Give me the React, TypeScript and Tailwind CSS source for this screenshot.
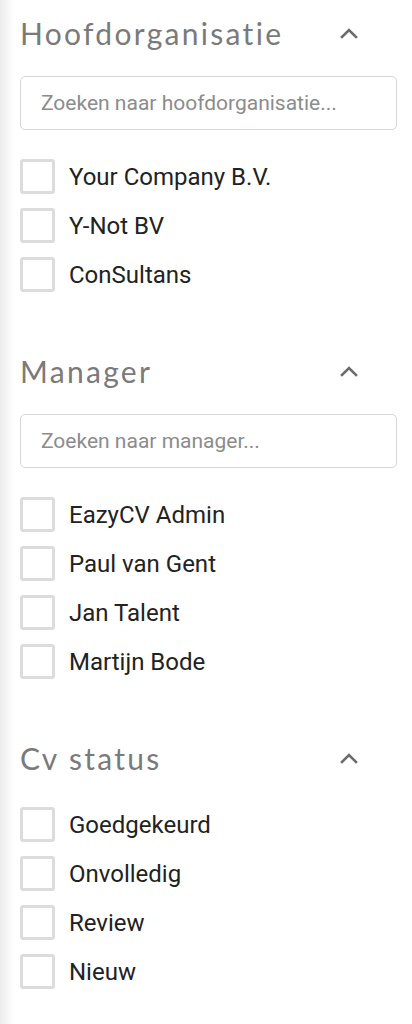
import React, { useState } from 'react';

interface FilterSectionProps {
  title: string;
  placeholder?: string;
  options: string[];
  className?: string;
}

function Chevron() {
  return (
    <svg width="20" height="12" viewBox="0 0 20 12" fill="none" className="text-[#6b6b6b]">
      <path d="M3 10 L10 3 L17 10" stroke="currentColor" strokeWidth="2.6" strokeLinecap="square" />
    </svg>
  );
}

function FilterSection({ title, placeholder, options, className }: FilterSectionProps) {
  const [checked, setChecked] = useState<string[]>([]);

  const toggle = (opt: string) => {
    setChecked((prev) => (prev.includes(opt) ? prev.filter((o) => o !== opt) : [...prev, opt]));
  };

  return (
    <section className={className}>
      <div className="flex items-center justify-between h-[40px] pr-[38px]">
        <h2 className="text-[30px] leading-none text-[#7a7a7a] font-['Lato',sans-serif] tracking-[2.3px]">{title}</h2>
        <Chevron />
      </div>

      {placeholder && (
        <input
          type="text"
          placeholder={placeholder}
          className="mt-[23px] w-full h-[54px] rounded-[5px] border border-[#d6d6d6] px-[20px] text-[21px] font-['Roboto',sans-serif] text-[#333] placeholder:text-[#8c8c8c] outline-none"
        />
      )}

      <ul className="mt-[22px]">
        {options.map((opt) => (
          <li key={opt} className="flex items-center h-[49px]">
            <button
              onClick={() => toggle(opt)}
              className="w-[35px] h-[35px] shrink-0 rounded-[3px] border-[3px] border-[#dcdcdc] bg-white flex items-center justify-center"
            >
              {checked.includes(opt) && <span className="w-[15px] h-[15px] bg-[#666]" />}
            </button>
            <span className="ml-[14px] text-[24px] text-[#222] font-['Roboto',sans-serif]">{opt}</span>
          </li>
        ))}
      </ul>
    </section>
  );
}

export default function App() {
  return (
    <div className="flex w-[412px] min-h-[1024px] bg-white">
      <div className="w-[14px] shrink-0 bg-gradient-to-r from-[#ececec] to-white" />
      <div className="flex-1 pt-[13px] pr-[15px] pl-[6px]">
        <FilterSection
          title="Hoofdorganisatie"
          placeholder="Zoeken naar hoofdorganisatie..."
          options={['Your Company B.V.', 'Y-Not BV', 'ConSultans']}
        />
        <FilterSection
          className="mt-[52px]"
          title="Manager"
          placeholder="Zoeken naar manager..."
          options={['EazyCV Admin', 'Paul van Gent', 'Jan Talent', 'Martijn Bode']}
        />
        <FilterSection
          className="mt-[52px]"
          title="Cv status"
          options={['Goedgekeurd', 'Onvolledig', 'Review', 'Nieuw']}
        />
      </div>
    </div>
  );
}
